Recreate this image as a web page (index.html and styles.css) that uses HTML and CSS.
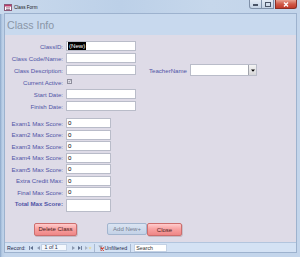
FILE: index.html
```html
<!DOCTYPE html>
<html>
<head>
<meta charset="utf-8">
<link rel="stylesheet" href="styles.css">
</head>
<body>
<div class="window">
  <div class="titlebar">
    <svg class="app-icon" width="8" height="7" viewBox="0 0 8 7">
      <rect x="0.5" y="0.5" width="7" height="6" fill="#fff" stroke="#8a5a78"/>
      <rect x="1" y="1" width="6" height="1.5" fill="#c0396a"/>
      <rect x="2" y="3.5" width="4" height="0.8" fill="#8a5a78"/>
      <rect x="2" y="5" width="4" height="0.8" fill="#8a5a78"/>
    </svg>
    <span class="title">Class Form</span>
    <div class="controls">
      <span class="ctl min"><span class="min-glyph"></span></span>
      <span class="ctl max"><span class="max-glyph"></span></span>
      <span class="ctl close">
        <svg width="6" height="5" viewBox="0 0 6 5"><path d="M1 0.5 L5 4.5 M5 0.5 L1 4.5" stroke="#fff" stroke-width="1.4"/></svg>
      </span>
    </div>
  </div>
  <div class="frame">
    <div class="content">
      <div class="header">Class Info</div>
      <div class="form">
        <div class="group top">
          <div class="row"><span class="lbl">ClassID:</span><div class="field w70"><span class="sel">(New)</span></div></div>
          <div class="row"><span class="lbl">Class Code/Name:</span><div class="field w70"></div></div>
          <div class="row"><span class="lbl">Class Description:</span><div class="field w70"></div>
            <span class="teacher">TeacherName</span>
            <div class="combo"><span class="drop"><svg width="4" height="3" viewBox="0 0 4 3"><path d="M0 0.5 H4 L2 2.7 Z" fill="#000"/></svg></span></div>
          </div>
          <div class="row"><span class="lbl">Current Active:</span>
            <span class="check"><svg width="5" height="5" viewBox="0 0 5 5"><path d="M1 2.6 L2 3.8 L4 0.8" stroke="#3c3c50" stroke-width="0.8" fill="none"/></svg></span>
          </div>
          <div class="row"><span class="lbl">Start Date:</span><div class="field w70"></div></div>
          <div class="row"><span class="lbl">Finish Date:</span><div class="field w70"></div></div>
        </div>
        <div class="group exams">
          <div class="row"><span class="lbl">Exam1 Max Score:</span><div class="field w45">0</div></div>
          <div class="row"><span class="lbl">Exam2 Max Score:</span><div class="field w45">0</div></div>
          <div class="row"><span class="lbl">Exam3 Max Score:</span><div class="field w45">0</div></div>
          <div class="row"><span class="lbl">Exam4 Max Score:</span><div class="field w45">0</div></div>
          <div class="row"><span class="lbl">Exam5 Max Score:</span><div class="field w45">0</div></div>
          <div class="row"><span class="lbl">Extra Credit Max:</span><div class="field w45">0</div></div>
          <div class="row"><span class="lbl">Final Max Score:</span><div class="field w45">0</div></div>
          <div class="row total"><span class="lbl bold">Total Max Score:</span><div class="field w45 tall"></div></div>
        </div>
        <div class="buttons">
          <span class="btn red delete">Delete Class</span>
          <span class="btn addnew">Add New+</span>
          <span class="btn red closebtn">Close</span>
        </div>
      </div>
      <div class="status">
        <span class="rec">Record:</span>
        <svg class="nav first" width="4" height="4" viewBox="0 0 4 4"><rect x="0" y="0" width="0.8" height="4" fill="#5d6d8c"/><path d="M4 0 V4 L1.2 2 Z" fill="#5d6d8c"/></svg>
        <svg class="nav prev" width="3" height="4" viewBox="0 0 3 4"><path d="M3 0 V4 L0 2 Z" fill="#8d9ab2"/></svg>
        <span class="recbox">1 of 1</span>
        <svg class="nav next" width="3" height="4" viewBox="0 0 3 4"><path d="M0 0 V4 L3 2 Z" fill="#8d9ab2"/></svg>
        <svg class="nav last" width="4" height="4" viewBox="0 0 4 4"><path d="M0 0 V4 L2.8 2 Z" fill="#5d6d8c"/><rect x="3.2" y="0" width="0.8" height="4" fill="#5d6d8c"/></svg>
        <svg class="nav newrec" width="7" height="4" viewBox="0 0 7 4"><path d="M0 0 V4 L2.8 2 Z" fill="#a9b4c6"/><path d="M5 0.3 L5.4 1.5 L6.7 1.5 L5.6 2.3 L6 3.6 L5 2.8 L4 3.6 L4.4 2.3 L3.3 1.5 L4.6 1.5 Z" fill="#e8d890"/></svg>
        <span class="sep s1"></span>
        <svg class="filter" width="6" height="6" viewBox="0 0 6 6"><path d="M0.3 0.5 H5 L3.2 2.8 V5.5 L2 4.8 V2.8 Z" fill="#9aa4b4"/><path d="M2.8 2.5 L5.8 5.7 M5.8 2.5 L2.8 5.7" stroke="#d23a2a" stroke-width="1.1"/></svg>
        <span class="unf">Unfiltered</span>
        <span class="sep s2"></span>
        <span class="search">Search</span>
      </div>
    </div>
  </div>
</div>
</body>
</html>
```
FILE: styles.css
```css
html, body {
  margin: 0;
  padding: 0;
}
body {
  width: 300px;
  height: 257px;
  overflow: hidden;
  font-family: "Liberation Sans", Arial, sans-serif;
  background: #c0d3ea;
}
.window {
  display: flex;
  flex-direction: column;
  height: 257px;
}
.titlebar {
  height: 14px;
  display: flex;
  align-items: center;
  padding-left: 4px;
  background: linear-gradient(90deg, #c9d9ec 0%, #bcd0e8 40%, #c6d7eb 70%, #c2d4ea 100%);
}
.app-icon {
  display: block;
}
.title {
  font-size: 4.6px;
  color: #1a1a1a;
  margin-left: 2px;
}
.controls {
  margin-left: auto;
  margin-right: 3px;
  align-self: flex-start;
  display: flex;
}
.ctl {
  height: 9px;
  box-sizing: border-box;
  border: 1px solid #7f90a8;
  border-top: none;
  display: flex;
  align-items: center;
  justify-content: center;
}
.min {
  width: 13px;
  border-radius: 0 0 0 3px;
  background: linear-gradient(#e2eaf4, #c5d3e4);
}
.max {
  width: 12px;
  border-left: none;
  background: linear-gradient(#e2eaf4, #c5d3e4);
}
.min-glyph {
  width: 5px;
  height: 2px;
  margin-top: 2px;
  background: #4a5466;
}
.max-glyph {
  width: 4px;
  height: 3px;
  border: 1px solid #4a5466;
  border-top-width: 1.5px;
}
.close {
  width: 22px;
  margin-left: 1px;
  border-color: #8c2f25;
  border-radius: 0 0 3px 0;
  background: linear-gradient(#e8a090, #d05a48 50%, #c13a2a);
}
.frame {
  flex: 1;
  display: flex;
  padding: 0 4px 5px 5px;
  background: linear-gradient(90deg, #8aa6c8 0, #b8cde6 2px, #c3d5eb 5px);
}
.content {
  flex: 1;
  display: flex;
  flex-direction: column;
  background: #dddae6;
  box-shadow: 0 0 0 1px #9db2ce;
}
.header {
  height: 21px;
  display: flex;
  align-items: center;
  padding-left: 2px;
  font-size: 10.6px;
  color: #8a96a7;
  background: #c8d9ee;
}
.form {
  flex: 1;
  display: flex;
  flex-direction: column;
  padding-top: 6px;
  background: #dedbe7;
}
.group {
  display: flex;
  flex-direction: column;
  gap: 2px;
}
.exams {
  margin-top: 7px;
  gap: 1.5px;
}
.row {
  display: flex;
  align-items: center;
  height: 10px;
}
.lbl {
  width: 58px;
  margin-right: 3px;
  text-align: right;
  font-size: 6.1px;
  color: #4f53a6;
  white-space: nowrap;
}
.bold {
  font-weight: bold;
}
.field {
  box-sizing: border-box;
  height: 10px;
  background: #fff;
  border: 1px solid #b9bcc9;
  font-size: 6.1px;
  line-height: 8px;
  padding-left: 1px;
  color: #000;
}
.w70 { width: 70px; }
.w45 { width: 45px; }
.total {
  height: 13px;
  align-items: flex-start;
}
.total .lbl {
  line-height: 9px;
}
.tall {
  height: 13px;
}
.sel {
  display: inline-block;
  background: #000;
  color: #fff;
  padding: 0 1px;
  line-height: 8px;
}
.teacher {
  margin-left: 13px;
  font-size: 6.1px;
  color: #4f53a6;
  white-space: nowrap;
  width: 38px;
}
.combo {
  margin-left: 3px;
  width: 67px;
  height: 12px;
  box-sizing: border-box;
  background: #fff;
  border: 1px solid #b9bcc9;
  display: flex;
  justify-content: flex-end;
}
.drop {
  width: 8px;
  box-sizing: border-box;
  border-left: 1px solid #a2a4ac;
  background: linear-gradient(#f4f4f4, #d6d6d9);
  display: flex;
  align-items: center;
  justify-content: center;
}
.check {
  margin-left: 1px;
  width: 5px;
  height: 5px;
  box-sizing: border-box;
  border: 0.6px solid #8e8e9c;
  background: #e9e9f0;
  display: flex;
  align-items: center;
  justify-content: center;
  margin-top: -2px;
}
.buttons {
  margin-top: 11.5px;
  padding-left: 29px;
  display: flex;
  align-items: flex-start;
}
.btn {
  box-sizing: border-box;
  height: 12.5px;
  border-radius: 2px;
  font-size: 6px;
  display: flex;
  align-items: center;
  justify-content: center;
  white-space: nowrap;
}
.red {
  background: linear-gradient(#ffcccc, #f8a2a2 45%, #ef8686);
  border: 1px solid #cc6e6e;
  color: #4a2020;
  box-shadow: 0.6px 0.8px 0 rgba(80, 40, 40, 0.25);
}
.delete { width: 43px; }
.addnew {
  width: 40px;
  height: 11.5px;
  margin-left: 30px;
  background: linear-gradient(#dae4f2, #c4d2e7);
  border: 1px solid #a2b5cf;
  color: #76808f;
}
.closebtn {
  width: 35px;
  height: 13px;
}
.status {
  height: 10px;
  display: flex;
  align-items: center;
  background: #d4e2f4;
  border-top: 1px solid #b2c5de;
  box-sizing: border-box;
  font-size: 5.3px;
  color: #1f2b4c;
}
.rec { margin-left: 2px; }
.nav { display: block; }
.first { margin-left: 3px; }
.prev { margin-left: 4px; }
.recbox {
  margin-left: 1px;
  width: 26px;
  height: 7px;
  box-sizing: border-box;
  background: #f4f8fd;
  border: 1px solid #c3d1e4;
  padding-left: 3px;
  line-height: 5px;
}
.next { margin-left: 5px; }
.last { margin-left: 3px; }
.newrec { margin-left: 3px; }
.sep {
  width: 1px;
  height: 8px;
  background: #a8b9d1;
}
.s1 { margin-left: 2px; }
.filter { margin-left: 3px; display: block; }
.unf { margin-left: 1px; }
.s2 { margin-left: 3px; }
.search {
  margin-left: 3px;
  width: 33px;
  height: 8px;
  box-sizing: border-box;
  background: #fff;
  border: 1px solid #c3d1e4;
  padding-left: 1px;
  line-height: 6px;
  color: #333;
}
```
